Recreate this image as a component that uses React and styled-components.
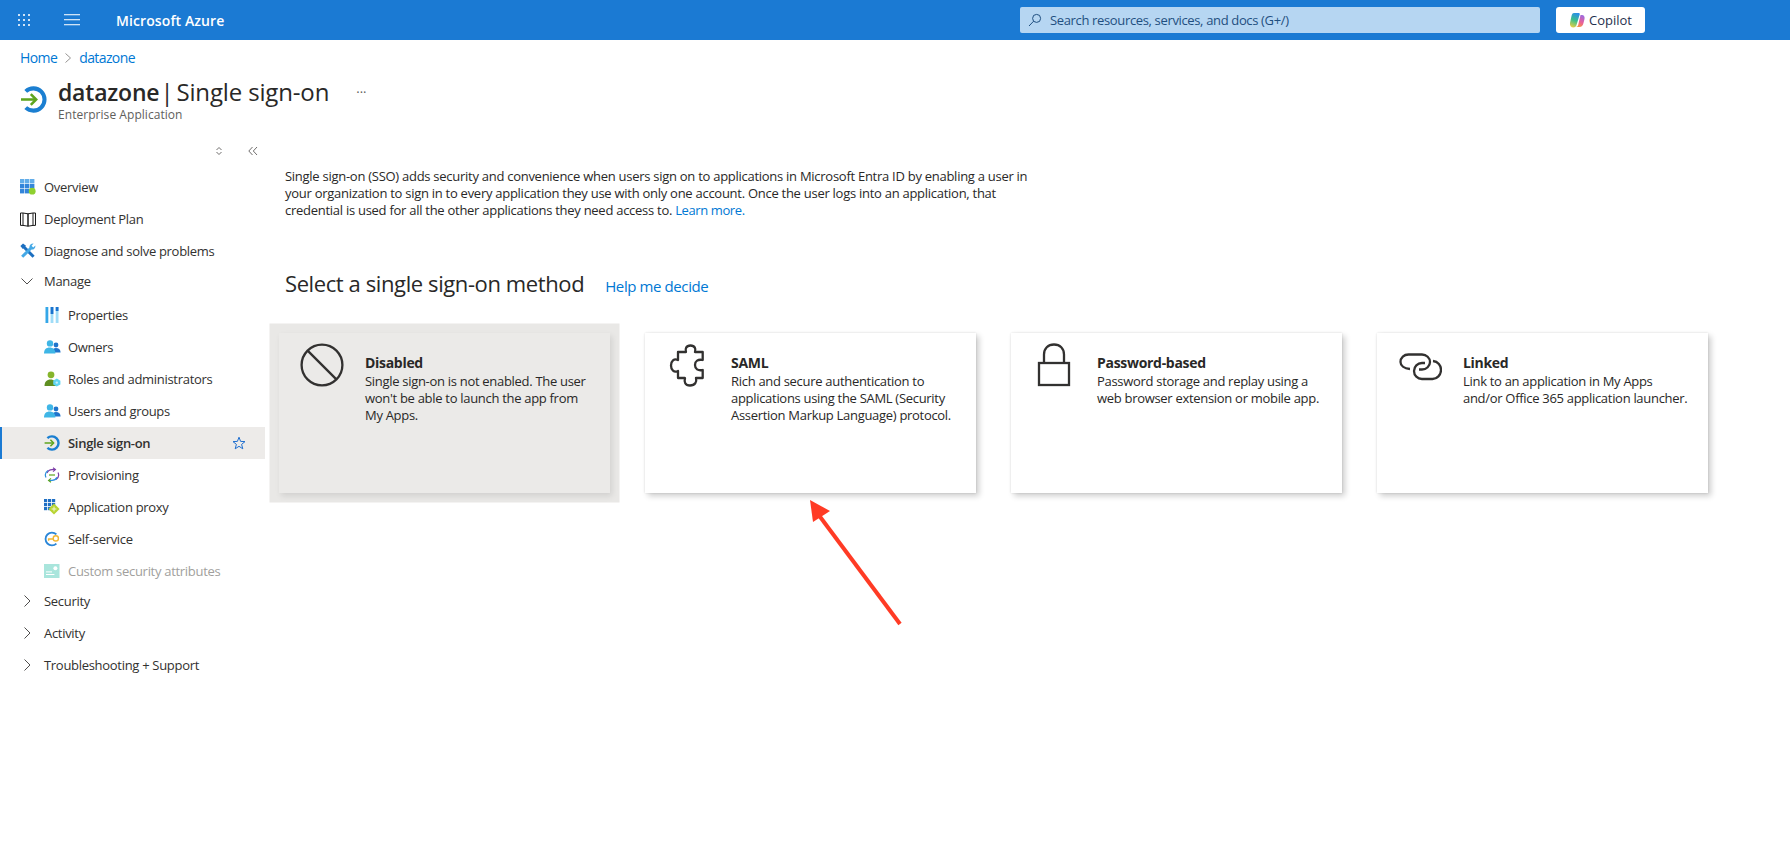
import React from 'react';
import styled, { createGlobalStyle } from 'styled-components';

const FONT = '"Open Sans", "Noto Sans", "Liberation Sans", sans-serif';

const GlobalStyle = createGlobalStyle`
  html, body {
    margin: 0;
    padding: 0;
    background: #fff;
    font-family: ${FONT};
    font-size: 13px;
    color: #292827;
  }
`;

const AppsIcon = () => (
  <svg width="14" height="14" viewBox="0 0 14 14" fill="#cfe3f6">
    {[1, 6, 11].map((y) =>
      [1, 6, 11].map((x) => <rect key={`${x}-${y}`} x={x} y={y} width="2" height="2" />),
    )}
  </svg>
);

const MenuIcon = () => (
  <svg width="16" height="12" viewBox="0 0 16 12" fill="#cfe3f6">
    <rect y="0" width="16" height="1.3" />
    <rect y="5" width="16" height="1.3" />
    <rect y="10" width="16" height="1.3" />
  </svg>
);

const SearchIcon = () => (
  <svg width="14" height="14" viewBox="0 0 14 14" fill="none" stroke="#1f4f80" strokeWidth="1">
    <circle cx="8.6" cy="5.4" r="4" />
    <path d="M5.6 8.2 1 13" />
  </svg>
);

const CopilotLogo = () => (
  <svg width="16" height="16" viewBox="0 0 16 16">
    <defs>
      <linearGradient id="cpLeft" x1="0.6" y1="0" x2="0.3" y2="1">
        <stop offset="0" stopColor="#2b8fe8" />
        <stop offset="0.5" stopColor="#3cc08a" />
        <stop offset="1" stopColor="#e6cf45" />
      </linearGradient>
      <linearGradient id="cpRight" x1="0.7" y1="0" x2="0.3" y2="1">
        <stop offset="0" stopColor="#9a6be0" />
        <stop offset="0.55" stopColor="#ea5f9a" />
        <stop offset="1" stopColor="#f6973f" />
      </linearGradient>
    </defs>
    <path d="M5 1h4.500c1 0 1.500.5 1.200 1.500L7.500 13c-.4 1.500-1.500 2.500-3 2.500C2 15.500.5 13.500 1 11l1.500-7C3 2 3.500 1 5 1z" fill="url(#cpLeft)" />
    <path d="M11.500 3h1.500c2 0 3 2 2.500 4l-1 4c-.5 2.500-2 4-4 4H7c1 0 1.800-.7 2.200-2z" fill="url(#cpRight)" />
  </svg>
);

const SsoIcon = ({ size = 16 }) => (
  <svg width={size} height={size} viewBox="0 0 16 16" fill="none">
    <path d="M3.4 3.2A6.6 6.6 0 1 1 3.4 12.8" stroke="#1b7fd1" strokeWidth="2.4" />
    <path d="M.6 8h8.6" stroke="#5ea51e" strokeWidth="1.5" />
    <path d="M6.4 4.8 9.6 8l-3.2 3.2" stroke="#5ea51e" strokeWidth="1.5" />
  </svg>
);

const OverviewIcon = () => (
  <svg width="16" height="16" viewBox="0 0 16 16">
    {[0, 5, 10].map((y) =>
      [0, 5, 10].map((x) => (
        <rect key={`${x}-${y}`} x={x} y={y} width="4.4" height="4.4" fill={y === 0 ? '#62ade9' : '#3385da'} />
      )),
    )}
    <circle cx="12.2" cy="12.2" r="3.4" fill="#8fd02f" />
  </svg>
);

const BookIcon = () => (
  <svg width="16" height="16" viewBox="0 0 16 16" fill="none" stroke="#1a1a1a" strokeWidth="1">
    <path d="M.5 2h2.500l5 .8v12.400l-5-.8H.5z" />
    <path d="M15.500 2H13l-5 .8v12.400l5-.8h2.500z" />
    <path d="M3 2v12.400M13 2v12.400" />
  </svg>
);

const ToolsIcon = () => (
  <svg width="16" height="16" viewBox="0 0 16 16">
    <path d="M3.200 3.200 13.600 13.800" stroke="#1c6fc0" strokeWidth="3" />
    <path d="M.4 3 3 .4 6 2.800 2.800 6z" fill="#1c6fc0" />
    <path d="M2.200 13.800 11 5" stroke="#45a9e6" strokeWidth="3" />
    <path d="M9.400 4.200C9.400 2 11.200.4 13.600.6L11.600 2.800l1.600 1.600 2.200-2c.2 2.400-1.400 4.200-3.600 4.200z" fill="#45a9e6" />
  </svg>
);

const PropertiesIcon = () => (
  <svg width="16" height="16" viewBox="0 0 16 16">
    <rect x="1.5" y="0" width="2.8" height="16" fill="#35a7e8" />
    <rect x="6.6" y="0" width="2.8" height="16" fill="#9fdcf7" />
    <rect x="6.6" y="0" width="2.8" height="7" fill="#1a73cf" />
    <rect x="11.7" y="0" width="2.8" height="16" fill="#9fdcf7" />
    <rect x="11.7" y="0" width="2.8" height="4" fill="#1a73cf" />
  </svg>
);

const PeopleIcon = () => (
  <svg width="17" height="16" viewBox="0 0 17 16">
    <circle cx="12" cy="6" r="2.4" fill="#1f74cc" />
    <path d="M8 13.500c0-3 1.600-4.400 4-4.400s4.600 1.400 4.600 4.400z" fill="#1f74cc" />
    <circle cx="6" cy="4.400" r="3.200" fill="#3fb6e6" />
    <path d="M0 14.600c0-4 2.200-6 5.600-6s5.800 2 5.800 6z" fill="#3fb6e6" />
  </svg>
);

const RolesIcon = () => (
  <svg width="17" height="16" viewBox="0 0 17 16">
    <circle cx="7" cy="3.800" r="3.400" fill="#86b52c" />
    <path d="M.5 15c0-4.200 2.400-6.400 6-6.400s6 2.200 6 6.400z" fill="#5f8f22" />
    <path d="M12.800 7.600 16.400 9.800v3.600L12.800 15.600 9.200 13.400V9.800z" fill="#5fd4f2" />
    <circle cx="12.800" cy="11.600" r="1.200" fill="#c8f1fb" />
  </svg>
);

const ProvisioningIcon = () => (
  <svg width="16" height="16" viewBox="0 0 16 16" fill="none" strokeWidth="1.2">
    <path d="M3 6A5.600 5.600 0 0 1 8 2.600h3" stroke="#7d3fa8" />
    <path d="M9 .8 11.400 2.600 9 4.600" stroke="#7d3fa8" />
    <path d="M14 5.600A5.600 5.600 0 0 1 12 12.600" stroke="#7d3fa8" />
    <path d="M13 10.400A5.600 5.600 0 0 1 8 13.400H5" stroke="#2b8fdc" />
    <path d="M7 11.400 4.600 13.400 7 15.200" stroke="#5ea51e" />
    <path d="M2 10.400A5.600 5.600 0 0 1 4 3.400" stroke="#2b8fdc" />
    <path d="M5 8h6" stroke="#5ea51e" />
  </svg>
);

const ProxyIcon = () => (
  <svg width="16" height="16" viewBox="0 0 16 16">
    {[0, 4, 8].map((y) =>
      [0, 4, 8].map((x) => <rect key={`${x}-${y}`} x={x} y={y} width="3.200" height="3.200" fill="#1f6fc4" />),
    )}
    <path d="M10 4.400 15.600 10 10 15.600 4.400 10z" fill="#b8d432" />
    <path d="M7.600 10h4.800M10 7.600v4.800" stroke="#f4f8d8" strokeWidth="1" />
  </svg>
);

const SelfServiceIcon = () => (
  <svg width="16" height="16" viewBox="0 0 16 16" fill="none">
    <path d="M12.400 3.400A6.400 6.400 0 1 0 12.400 12.600" stroke="#2a86d8" strokeWidth="1.800" />
    <circle cx="11.800" cy="7.400" r="2.600" stroke="#f2b632" strokeWidth="1.400" />
    <path d="M9.400 8H4.600v1.800" stroke="#f2b632" strokeWidth="1.400" />
  </svg>
);

const AttributesIcon = () => (
  <svg width="16" height="16" viewBox="0 0 16 16">
    <rect x="0" y="1" width="15.500" height="14" fill="#a9e5dc" />
    <circle cx="11.400" cy="5.200" r="2" fill="#fff" />
    <rect x="2" y="8.400" width="6" height="1" fill="#fff" />
    <rect x="2" y="11" width="8.400" height="1" fill="#fff" />
  </svg>
);

const Chevron = ({ open }) => (
  <svg width="14" height="14" viewBox="0 0 14 14" fill="none" stroke="#3b3a39" strokeWidth="0.9">
    {open ? <path d="M1.500 4.500 7 10l5.500-5.500" /> : <path d="M4.500 1.500 10 7l-5.500 5.500" />}
  </svg>
);

const StarIcon = () => (
  <svg width="14" height="14" viewBox="0 0 14 14" fill="none" stroke="#1f6fd0" strokeWidth="1">
    <path d="M7 1.200 8.600 5.400 13 5.600 9.600 8.400 10.800 12.800 7 10.300 3.200 12.800 4.400 8.400 1 5.600 5.400 5.400z" />
  </svg>
);

const BlockedGlyph = () => (
  <svg width="44" height="44" viewBox="0 0 44 44" fill="none" stroke="#323130" strokeWidth="2.300">
    <circle cx="22" cy="22" r="20.400" />
    <path d="M7.600 7.600 36.400 36.400" />
  </svg>
);

const PuzzleGlyph = () => (
  <svg width="44" height="44" viewBox="6 3 44 44" fill="none" stroke="#323130" strokeWidth="2.300" strokeLinejoin="round">
    <path d="M18 12h8c-1-3 0-6.500 4.500-6.500S36 9 35 12h7.700v8c-4.700-1-7.700 1-7.700 5s3 6 7.700 5v8H36c1 4-1 7.500-6 7.500S24 42 25 38h-7v-7c-4 2-7-1-7-5.500S14 18 18 20z" />
  </svg>
);

const LockGlyph = () => (
  <svg width="44" height="44" viewBox="0 0 44 44" fill="none" stroke="#323130" strokeWidth="2.300">
    <rect x="7" y="20" width="30" height="22" />
    <path d="M12 20V11.500C12 5.500 16 1.500 22 1.500s10 4 10 10V20" />
  </svg>
);

const LinkGlyph = () => (
  <svg width="44" height="44" viewBox="3 -2 44 44" fill="none" stroke="#323130" strokeWidth="2.300">
    <path d="M15 24C9 23.500 5.500 20.500 5.500 17c0-4.500 3.500-7.500 8-7.500H27c4.500 0 8 3.500 8 7.500s-3.500 7.500-8 7.500h-3" />
    <path d="M38 16c5 .5 8 4.500 8 9 0 5-4 9-8.500 9H27c-4.500 0-8-3.500-8-8s3.500-8 8-8h3" />
  </svg>
);

const NAV = [
  { label: 'Overview', icon: <OverviewIcon /> },
  { label: 'Deployment Plan', icon: <BookIcon /> },
  { label: 'Diagnose and solve problems', icon: <ToolsIcon /> },
  { label: 'Manage', group: 'open' },
  { label: 'Properties', icon: <PropertiesIcon />, sub: true },
  { label: 'Owners', icon: <PeopleIcon />, sub: true },
  { label: 'Roles and administrators', icon: <RolesIcon />, sub: true },
  { label: 'Users and groups', icon: <PeopleIcon />, sub: true },
  { label: 'Single sign-on', icon: <SsoIcon />, sub: true, active: true },
  { label: 'Provisioning', icon: <ProvisioningIcon />, sub: true },
  { label: 'Application proxy', icon: <ProxyIcon />, sub: true },
  { label: 'Self-service', icon: <SelfServiceIcon />, sub: true },
  { label: 'Custom security attributes', icon: <AttributesIcon />, sub: true, muted: true },
  { label: 'Security', group: 'closed' },
  { label: 'Activity', group: 'closed' },
  { label: 'Troubleshooting + Support', group: 'closed' },
];

const METHODS = [
  {
    title: 'Disabled',
    glyph: <BlockedGlyph />,
    selected: true,
    text: ['Single sign-on is not enabled. The user', "won't be able to launch the app from", 'My Apps.'],
  },
  {
    title: 'SAML',
    glyph: <PuzzleGlyph />,
    text: ['Rich and secure authentication to', 'applications using the SAML (Security', 'Assertion Markup Language) protocol.'],
  },
  {
    title: 'Password-based',
    glyph: <LockGlyph />,
    text: ['Password storage and replay using a', 'web browser extension or mobile app.'],
  },
  {
    title: 'Linked',
    glyph: <LinkGlyph />,
    text: ['Link to an application in My Apps', 'and/or Office 365 application launcher.'],
  },
];

const App = () => (
  <Page>
    <GlobalStyle />
    <TopBar>
      <TopBarButton $width={47}>
        <AppsIcon />
      </TopBarButton>
      <TopBarButton $width={49}>
        <MenuIcon />
      </TopBarButton>
      <Brand>Microsoft Azure</Brand>
      <SearchBox>
        <SearchIcon />
        <span>Search resources, services, and docs (G+/)</span>
      </SearchBox>
      <CopilotButton>
        <CopilotLogo />
        Copilot
      </CopilotButton>
    </TopBar>

    <Breadcrumb>
      <CrumbLink>Home</CrumbLink>
      <CrumbSep>
        <svg width="10" height="10" viewBox="0 0 10 10" fill="none" stroke="#8a8886" strokeWidth="0.9">
          <path d="M2.500.5 7.500 5l-5 4.500" />
        </svg>
      </CrumbSep>
      <CrumbLink>datazone</CrumbLink>
    </Breadcrumb>

    <TitleRow>
      <TitleIcon>
        <SsoIcon size={27} />
      </TitleIcon>
      <TitleText>
        <Title>
          <strong>datazone</strong>
          <TitleSep>|</TitleSep>
          Single sign-on
        </Title>
        <Subtitle>Enterprise Application</Subtitle>
      </TitleText>
      <MoreDots>···</MoreDots>
    </TitleRow>

    <Body>
      <Sidebar>
        <SidebarTools>
          <svg width="10" height="12" viewBox="0 0 10 12" fill="none" stroke="#605e5c" strokeWidth="0.9">
            <path d="M2.500 5 5 2.500 7.500 5M2.500 7 5 9.500 7.500 7" />
          </svg>
          <svg width="10" height="10" viewBox="0 0 10 10" fill="none" stroke="#605e5c" strokeWidth="0.9">
            <path d="M4.500 1 .8 5l3.700 4M9 1 5.300 5 9 9" />
          </svg>
        </SidebarTools>
        {NAV.map((item) => (
          <NavRow key={item.label} $sub={item.sub} $active={item.active} $muted={item.muted} $group={!!item.group}>
            <NavIcon>{item.group ? <Chevron open={item.group === 'open'} /> : item.icon}</NavIcon>
            <NavLabel>{item.label}</NavLabel>
            {item.active && (
              <NavStar>
                <StarIcon />
              </NavStar>
            )}
          </NavRow>
        ))}
      </Sidebar>

      <Main>
        <Intro>
          Single sign-on (SSO) adds security and convenience when users sign on to applications in Microsoft Entra ID by enabling a user in
          <br />
          your organization to sign in to every application they use with only one account. Once the user logs into an application, that
          <br />
          credential is used for all the other applications they need access to. <TextLink>Learn more.</TextLink>
        </Intro>
        <MethodHeader>
          <MethodHeading>Select a single sign-on method</MethodHeading>
          <HelpLink>Help me decide</HelpLink>
        </MethodHeader>
        <Cards>
          {METHODS.map((m) => (
            <Card key={m.title} $selected={m.selected}>
              <CardGlyph>{m.glyph}</CardGlyph>
              <CardBody>
                <CardTitle>{m.title}</CardTitle>
                {m.text.map((line) => (
                  <CardLine key={line}>{line}</CardLine>
                ))}
              </CardBody>
            </Card>
          ))}
        </Cards>
      </Main>
    </Body>

    <Annotation width="112" height="144" viewBox="0 0 112 144">
      <path d="M100 134 15 20" stroke="#ff3b25" strokeWidth="4" fill="none" />
      <path d="M10 10 13 32 30 21z" fill="#ff3b25" />
    </Annotation>
  </Page>
);

const Page = styled.div`
  position: relative;
  width: 1790px;
  height: 867px;
  overflow: hidden;
  background: #fff;
`;

const TopBar = styled.header`
  display: flex;
  align-items: center;
  height: 40px;
  background: #1b7ad3;
  color: #fff;
`;

const TopBarButton = styled.div`
  display: flex;
  align-items: center;
  justify-content: center;
  width: ${(p) => p.$width}px;
  height: 40px;
`;

const Brand = styled.div`
  margin-left: 20px;
  width: 904px;
  font-size: 14px;
  font-weight: 600;
  letter-spacing: 0.1px;
`;

const SearchBox = styled.div`
  display: flex;
  align-items: center;
  gap: 8px;
  box-sizing: border-box;
  width: 520px;
  height: 26px;
  padding-left: 8px;
  border-radius: 2px;
  background: #b6d6f2;
  color: #1f4f80;
  font-size: 13px;
  letter-spacing: -0.35px;
`;

const CopilotButton = styled.div`
  display: flex;
  align-items: center;
  justify-content: center;
  gap: 4px;
  width: 89px;
  height: 26px;
  margin-left: 16px;
  border-radius: 3px;
  background: #fff;
  color: #1f2f4f;
  font-size: 13px;
  font-weight: 500;
`;

const Breadcrumb = styled.nav`
  display: flex;
  align-items: center;
  height: 35px;
  padding-left: 20px;
  padding-bottom: 1px;
  font-size: 14px;
`;

const CrumbLink = styled.a`
  color: #0078d4;
  letter-spacing: -0.6px;
`;

const CrumbSep = styled.span`
  display: flex;
  width: 22px;
  justify-content: center;
`;

const TitleRow = styled.div`
  display: flex;
  align-items: flex-start;
  height: 52px;
  padding-left: 20px;
`;

const TitleIcon = styled.div`
  display: flex;
  width: 38px;
  padding-top: 10px;
`;

const TitleText = styled.div`
  display: flex;
  flex-direction: column;
`;

const Title = styled.h1`
  margin: 0;
  font-size: 24px;
  line-height: 32px;
  font-weight: 400;
  letter-spacing: -0.15px;
  white-space: nowrap;
  color: #292827;

  strong {
    font-size: 23px;
    font-weight: 600;
    letter-spacing: -0.2px;
  }
`;

const TitleSep = styled.span`
  margin: 0 3px 0 1px;
`;

const Subtitle = styled.div`
  font-size: 12px;
  line-height: 14px;
  color: #605e5c;
  letter-spacing: 0.05px;
`;

const MoreDots = styled.div`
  margin-left: 27px;
  line-height: 32px;
  font-size: 13px;
  color: #605e5c;
`;

const Body = styled.div`
  display: flex;
`;

const Sidebar = styled.aside`
  width: 265px;
  flex-shrink: 0;
`;

const SidebarTools = styled.div`
  display: flex;
  align-items: center;
  justify-content: flex-end;
  gap: 24px;
  box-sizing: border-box;
  height: 43px;
  padding: 3px 7px 0 0;
`;

const NavRow = styled.div`
  position: relative;
  display: flex;
  align-items: center;
  height: ${(p) => (p.$group ? 27 : 32)}px;
  margin-bottom: ${(p) => (p.$group ? 5 : 0)}px;
  padding-left: ${(p) => (p.$sub ? 44 : 20)}px;
  background: ${(p) => (p.$active ? '#edebe9' : 'transparent')};
  box-shadow: ${(p) => (p.$active ? 'inset 2px 0 0 #1b7ad3' : 'none')};
  color: ${(p) => (p.$muted ? '#a19f9d' : '#323130')};
  font-weight: ${(p) => (p.$active ? 600 : 400)};
`;

const NavIcon = styled.span`
  display: flex;
  align-items: center;
  width: 24px;
  flex-shrink: 0;
`;

const NavLabel = styled.span`
  font-size: 13px;
  letter-spacing: -0.3px;
  white-space: nowrap;
`;

const NavStar = styled.span`
  display: flex;
  margin-left: auto;
  margin-right: 19px;
`;

const Main = styled.main`
  flex: 1;
  padding: 40px 0 0 14px;
`;

const Intro = styled.p`
  margin: 0 0 0 6px;
  font-size: 13px;
  line-height: 17px;
  letter-spacing: -0.27px;
  white-space: nowrap;
  color: #292827;
`;

const TextLink = styled.a`
  color: #0078d4;
  letter-spacing: -0.4px;
`;

const MethodHeader = styled.div`
  display: flex;
  align-items: center;
  gap: 21px;
  margin: 50px 0 0 6px;
  height: 28px;
`;

const MethodHeading = styled.h2`
  margin: 0;
  font-size: 22px;
  line-height: 28px;
  font-weight: 400;
  letter-spacing: -0.4px;
  color: #292827;
`;

const HelpLink = styled.a`
  padding-top: 5px;
  color: #0078d4;
  font-size: 15px;
  letter-spacing: -0.4px;
`;

const Cards = styled.div`
  display: flex;
  gap: 35px;
  margin-top: 36px;
`;

const Card = styled.div`
  display: flex;
  width: 331px;
  height: 160px;
  flex-shrink: 0;
  background: ${(p) => (p.$selected ? '#ebeae8' : '#fff')};
  box-shadow: ${(p) =>
    p.$selected
      ? '2px 3px 6px rgba(0, 0, 0, 0.1), 0 0 0 9.5px #e9e8e6'
      : '3px 3px 6px rgba(0, 0, 0, 0.2), 0 0 2px rgba(0, 0, 0, 0.12)'};
`;

const CardGlyph = styled.div`
  display: flex;
  justify-content: center;
  width: 86px;
  flex-shrink: 0;
  padding-top: 10px;
`;

const CardBody = styled.div`
  padding-top: 21px;
`;

const CardTitle = styled.div`
  margin-bottom: 2px;
  font-size: 14px;
  font-weight: 700;
  line-height: 17px;
  letter-spacing: -0.3px;
  color: #292827;
`;

const CardLine = styled.div`
  font-size: 13px;
  line-height: 17px;
  letter-spacing: -0.3px;
  white-space: nowrap;
  color: #292827;
`;

const Annotation = styled.svg`
  position: absolute;
  left: 800px;
  top: 490px;
`;

export default App;
